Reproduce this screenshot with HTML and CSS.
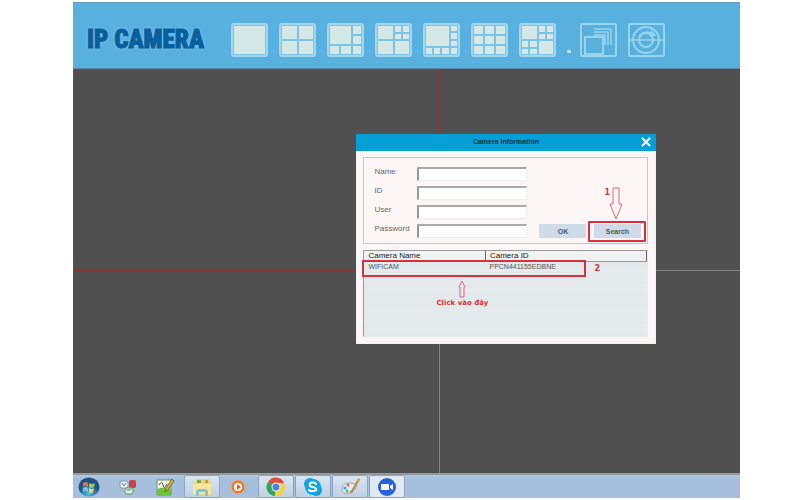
FILE: index.html
```html
<!DOCTYPE html>
<html lang="en">
<head>
<meta charset="utf-8">
<title>IP Camera</title>
<link rel="stylesheet" href="styles.css">
</head>
<body>
<div class="screen">
  <header class="topbar">
    <h1 class="brand">IP CAMERA</h1>
    <nav class="layouts" aria-label="View layouts">
      <button class="layout" aria-label="1 view"><svg viewBox="0 0 37 34"><rect class="plate" x="1" y="1" width="35" height="32" rx="2"/><path class="cell" d="M3 3h31v28H3z"/></svg></button>
      <button class="layout" aria-label="4 views"><svg viewBox="0 0 37 34"><rect class="plate" x="1" y="1" width="35" height="32" rx="2"/><path class="cell" d="M3 3h15v13H3zM20 3h14v13H20zM3 18h15v13H3zM20 18h14v13H20z"/></svg></button>
      <button class="layout" aria-label="6 views"><svg viewBox="0 0 37 34"><rect class="plate" x="1" y="1" width="35" height="32" rx="2"/><path class="cell" d="M3 3h21v18H3zM26 3h8v8h-8zM26 13h8v8h-8zM26 23h8v8h-8zM3 23h9v8H3zM14 23h10v8H14z"/></svg></button>
      <button class="layout" aria-label="7 views"><svg viewBox="0 0 37 34"><rect class="plate" x="1" y="1" width="35" height="32" rx="2"/><path class="cell" d="M3 3h15v13H3zM20 3h6v6h-6zM28 3h6v6h-6zM20 11h6v5h-6zM28 11h6v5h-6zM3 18h15v13H3zM20 18h14v13H20z"/></svg></button>
      <button class="layout" aria-label="8 views"><svg viewBox="0 0 37 34"><rect class="plate" x="1" y="1" width="35" height="32" rx="2"/><path class="cell" d="M3 3h23v20H3zM28 3h6v5h-6zM28 10h6v6h-6zM28 18h6v5h-6zM28 25h6v6h-6zM3 25h6v6H3zM11 25h6v6h-6zM19 25h7v6h-7z"/></svg></button>
      <button class="layout" aria-label="9 views"><svg viewBox="0 0 37 34"><rect class="plate" x="1" y="1" width="35" height="32" rx="2"/><path class="cell" d="M3 3h9v8H3zM14 3h9v8h-9zM25 3h9v8h-9zM3 13h9v8H3zM14 13h9v8h-9zM25 13h9v8h-9zM3 23h9v8H3zM14 23h9v8h-9zM25 23h9v8h-9z"/></svg></button>
      <button class="layout" aria-label="10 views"><svg viewBox="0 0 37 34"><rect class="plate" x="1" y="1" width="35" height="32" rx="2"/><path class="cell" d="M3 3h15v13H3zM20 3h6v6h-6zM28 3h6v6h-6zM20 11h6v5h-6zM28 11h6v5h-6zM3 18h6v6H3zM11 18h7v6h-7zM3 26h6v5H3zM11 26h7v5h-7zM20 18h14v13H20z"/></svg></button>
      <span class="dot"></span>
      <button class="layout" aria-label="Cascade"><svg class="line" viewBox="0 0 37 34"><rect x="1" y="1" width="35" height="32" rx="1"/><path d="M5 14h18v17H5z"/><path class="thin" d="M14 6h17v16M14 9h14v13M14 12h11v10"/></svg></button>
      <button class="layout" aria-label="Full screen"><svg class="line" viewBox="0 0 37 34"><rect x="1" y="1" width="35" height="32" rx="1"/><circle cx="18" cy="17" r="13"/><circle cx="18" cy="17" r="7"/><path class="thin" d="M1 17h34M11 13c4-5 11-5 15-1M23 8l4 4-5 1"/></svg></button>
    </nav>
  </header>

  <main class="wall">
    <div class="view selected"></div>
    <div class="view"></div>
    <div class="view"></div>
    <div class="view"></div>

    <section class="dialog" aria-labelledby="dialog-title">
      <div class="titlebar">
        <h2 id="dialog-title">Camera Information</h2>
        <button class="close" aria-label="Close"><svg viewBox="0 0 10 10"><path d="M1 1l8 8M9 1L1 9"/></svg></button>
      </div>
      <div class="content">
        <form class="panel">
          <div class="fields">
            <label for="name">Name</label><input id="name" type="text">
            <label for="cid">ID</label><input id="cid" type="text">
            <label for="user">User</label><input id="user" type="text">
            <label for="pass">Password</label><input id="pass" type="password">
          </div>
          <div class="actions">
            <button class="btn" type="button">OK</button>
            <div class="callout">
              <button class="btn" type="button">Search</button>
              <span class="note step-one">1</span>
              <svg class="arrow-down" viewBox="0 0 14 33"><path d="M4 1h6v16h3L7 32 1 17h3z"/></svg>
            </div>
          </div>
        </form>
        <div class="list">
          <table>
            <thead><tr><th>Camera Name</th><th>Camera ID</th></tr></thead>
            <tbody><tr><td>WIFICAM</td><td>PPCN441155EDBNE</td></tr></tbody>
          </table>
          <div class="mark"></div>
          <span class="note step-two">2</span>
          <div class="hint">
            <svg viewBox="0 0 8 18"><path d="M2 17V7H1l3-6 3 6H6v10z"/></svg>
            <span class="note">Click vào đây</span>
          </div>
        </div>
      </div>
    </section>
  </main>

  <footer class="taskbar">
    <button class="app start" aria-label="Start"><svg viewBox="0 0 22 20"><defs><radialGradient id="orb" cx="50%" cy="85%"><stop offset="0" stop-color="#4dc4ee"/><stop offset="1" stop-color="#205085"/></radialGradient></defs><ellipse cx="11" cy="10" rx="10.500" ry="9.500" fill="url(#orb)"/><path d="M5 6q3-2 5 0v4q-3-2-5 0z" fill="#ee6c35"/><path d="M11 6q3 2 6 0l-1 4q-3 2-5 0z" fill="#9dce4e"/><path d="M5 11q3-2 5 0v4q-3-2-5 0z" fill="#72c3f0"/><path d="M11 11q3 2 5 0l-1 4q-2 2-4 0z" fill="#ffd34e"/></svg></button>
    <button class="app" aria-label="Keyboard input"><svg viewBox="0 0 22 20"><rect x="3" y="4" width="8" height="7" rx="2" fill="#eef5fc" stroke="#8196bb"/><rect x="12" y="3" width="7" height="8" rx="2" fill="#d33b45"/><rect x="8" y="11" width="8" height="6" rx="2" fill="#e6f2e2" stroke="#5d9c65"/><path d="M5 6l2 3 2-3M14 5l3 4M10 13h4" stroke="#5d6e94" fill="none"/></svg></button>
    <button class="app" aria-label="Notepad++"><svg viewBox="0 0 22 20"><path d="M3 3h14v15H3z" fill="#f0f4ea" stroke="#739366"/><path d="M3 12q7-3 14 0v6H3z" fill="#6bc23d"/><path d="M5 8q3-5 4 0t4-1" fill="none" stroke="#40513b"/><path d="M18 2l2 2-7 10-2 1 1-4z" fill="#e5af3d" stroke="#77672f"/></svg></button>
    <button class="app open" aria-label="Explorer"><svg viewBox="0 0 22 20"><path d="M2 5h3V2h13v3h2v13H2z" fill="#ecd581"/><path d="M6 3h4v3H6z" fill="#77ac5b"/><path d="M14 3h3v3h-3z" fill="#d99449"/><path d="M2 7h18v10H2z" fill="#f9e59b"/><path d="M5 19v-4q0-3 3-3h6q3 0 3 3v4h-3v-4H8v4z" fill="#78c8e8"/></svg></button>
    <button class="app" aria-label="Media player"><svg viewBox="0 0 22 20"><rect x="11" y="5" width="8" height="11" rx="2" fill="#8fc0df"/><circle cx="10" cy="10" r="7" fill="#e77c38" stroke="#f0b179"/><circle cx="10" cy="10" r="4" fill="#fff"/><path d="M9 7l4 3-4 3z" fill="#d96524"/></svg></button>
    <button class="app open" aria-label="Chrome"><svg viewBox="0 0 22 20"><path d="M11 10L3 5a9 9 0 0 1 16 1z" fill="#df4b3d"/><path d="M11 10L3 5a9 9 0 0 0 7 14z" fill="#36a35a"/><path d="M11 10L10 19A9 9 0 0 0 19 6h-8z" fill="#f8ce42"/><circle cx="11" cy="10" r="4.500" fill="#f5f7f5"/><circle cx="11" cy="10" r="3.500" fill="#4287e5"/></svg></button>
    <button class="app open" aria-label="Skype"><svg viewBox="0 0 22 20"><circle cx="8" cy="7" r="6" fill="#109fd8"/><circle cx="14" cy="13" r="6" fill="#109fd8"/><circle cx="11" cy="10" r="8" fill="#12a5df"/><path d="M14 7q-1-2-4-1.500T8 9q1 1 3 1t3 2-3 2-4-1" fill="none" stroke="#fff" stroke-width="2" stroke-linecap="round"/></svg></button>
    <button class="app open" aria-label="Paint"><svg viewBox="0 0 22 20"><path d="M3 12q0-6 8-6 7 0 6 5-1 3-4 2-2 0-2 3-8 2-8-4z" fill="#e2edf1" stroke="#92aab9"/><circle cx="6" cy="11" r="1.500" fill="#4c9edb"/><circle cx="9" cy="8" r="1.500" fill="#df6158"/><circle cx="8" cy="14" r="1.500" fill="#69ad54"/><path d="M20 2l-8 14" stroke="#bd8745" stroke-width="2"/><path d="M17 3l4-2-1 5z" fill="#d6a25d"/></svg></button>
    <button class="app open" aria-label="Zoom"><svg viewBox="0 0 22 20"><circle cx="11" cy="10" r="9" fill="#2563d8"/><rect x="5" y="7" width="8" height="6" rx="1" fill="#fff"/><path d="M14 9l3-2v6l-3-2z" fill="#fff"/></svg></button>
  </footer>
</div>
</body>
</html>
```
FILE: styles.css
```css
* { box-sizing: border-box; }

body {
  margin: 0;
  background: #fff;
  font-family: "Liberation Sans", Arial, sans-serif;
  font-size: 8px;
  color: #444;
}

button {
  border: 0;
  padding: 0;
  background: none;
  font: inherit;
  color: inherit;
}

.screen {
  display: flex;
  flex-direction: column;
  min-height: 100vh;
  margin: 0 60px 0 73px;
  border-top: 2px solid #fff;
  border-bottom: 2px solid #fff;
}

.topbar {
  display: flex;
  align-items: center;
  gap: 24px;
  padding: 20px 14px 11px;
  background: #58b0df;
  border-top: 1px solid #6b9dba;
  border-bottom: 1px solid #5d87a0;
}

.brand {
  margin: 0;
  width: 120px;
  font: 900 25px/34px "Liberation Sans Narrow", "Roboto Condensed", "DejaVu Sans Condensed", sans-serif;
  color: #075f9e;
  white-space: nowrap;
  -webkit-text-stroke: 1px #075f9e;
  text-shadow: 0 0 3px #8cc9ea, 0 0 3px #8cc9ea;
}

.layouts {
  display: flex;
  align-items: center;
  gap: 11px;
}

.layout, .layout svg {
  display: block;
  width: 37px;
  height: 34px;
}

.plate { fill: #7cc4e5; stroke: #a2d8ef; stroke-width: 2; }
.cell { fill: #d3e8e7; }
.line { fill: none; stroke: #98d4ee; stroke-width: 2; }
.thin { stroke-width: 1.5; }

.dot {
  align-self: flex-end;
  width: 4px;
  height: 3px;
  margin: 0 -2px 4px 0;
  border-radius: 1px;
  background: #c5e5f2;
}

.wall {
  position: relative;
  flex: 1;
  display: grid;
  grid-template-columns: 55fr 45fr;
  grid-template-rows: 1fr 1fr;
  min-height: 340px;
  background: #505050;
}

.view {
  border-right: 1px solid #858585;
  border-bottom: 1px solid #858585;
}
.view:nth-child(even) { border-right: 0; }
.view:nth-child(3), .view:nth-child(4) { border-bottom: 0; }
.view.selected {
  border: 1px solid #a8303a;
  border-right: 2px solid #8e3439;
  border-bottom: 2px solid #8e3439;
}

.dialog {
  position: absolute;
  top: 16%;
  left: 42.5%;
  width: 300px;
  background: #fdf6f6;
  border: 1px solid #f3f3f3;
  border-top: 0;
}

.titlebar {
  display: grid;
  grid-template-columns: 1fr auto;
  align-items: center;
  height: 17px;
  margin: 0 -1px;
  padding-right: 5px;
  background: #049fd7;
}

.titlebar h2 {
  margin: 0;
  padding-left: 14px;
  font-size: 7px;
  line-height: 16px;
  text-align: center;
  color: #07364c;
}

.close svg {
  display: block;
  width: 10px;
  height: 10px;
  stroke: #fff;
  stroke-width: 2;
}

.content { padding: 6px 7px 6px 6px; }

.panel {
  display: flex;
  justify-content: space-between;
  padding: 9px 1px 5px 10px;
  border: 1px solid #c9c6c6;
}

.fields {
  display: grid;
  grid-template-columns: 43px 110px;
  grid-auto-rows: 14px;
  row-gap: 5px;
}

.fields label { line-height: 10px; color: #666; }

.fields input {
  width: 100%;
  height: 14px;
  padding: 0 2px;
  border: 1px solid #eee;
  border-top: 2px solid #aaa;
  border-left: 2px solid #999;
  background: #fff;
  font: inherit;
}

.actions {
  display: flex;
  align-items: center;
  align-self: flex-end;
  gap: 2px;
  margin-bottom: -4px;
}

.btn {
  width: 47px;
  height: 14px;
  background: #cfdbe6;
  font-size: 7px;
  font-weight: bold;
  color: #4b5661;
}

.callout {
  position: relative;
  display: flex;
  justify-content: center;
  align-items: center;
  width: 58px;
  height: 21px;
  border: 2px solid #d9303c;
  border-radius: 1px;
}

.note {
  font: bold 8px/10px "DejaVu Sans", sans-serif;
  color: #d9303c;
}

.step-one { position: absolute; left: 14px; top: -35px; }
.step-two { position: absolute; left: 230px; top: 13px; }

.arrow-down {
  position: absolute;
  left: 19px;
  top: -36px;
  width: 14px;
  height: 33px;
}

.arrow-down, .hint svg { fill: none; stroke: #df6a72; }

.list {
  position: relative;
  height: 87px;
  margin-top: 6px;
  border: 1px solid #999;
  border-right-color: #e7ebec;
  border-bottom-color: #e7ebec;
  background: repeating-linear-gradient(#e4eaec 0 9px, #e8ecee 9px 10px);
}

table {
  width: 100%;
  border-collapse: collapse;
  table-layout: fixed;
}

th, td {
  height: 11px;
  padding: 0 4px;
  font-size: 8px;
  line-height: 10px;
  font-weight: normal;
  text-align: left;
}

th {
  background: #f1f3f3;
  border-right: 1px solid #666;
  border-bottom: 1px solid #999;
  color: #222;
}
th:first-child { width: 121px; }
td { color: #555; font-size: 7px; }

.mark {
  position: absolute;
  left: -2px;
  top: 9px;
  width: 224px;
  height: 17px;
  border: 2px solid #d9303c;
}

.hint {
  position: absolute;
  left: 72px;
  top: 29px;
  display: flex;
  flex-direction: column;
  align-items: center;
  white-space: nowrap;
}
.hint svg { width: 8px; height: 18px; }
.hint .note { font-size: 7px; }

.taskbar {
  display: flex;
  align-items: stretch;
  gap: 1px;
  height: 25px;
  padding-right: 8px;
  border-top: 2px solid #9399a0;
  background: linear-gradient(#b3cae2, #a5bfdc 4px);
}

.app {
  display: grid;
  place-items: center;
  width: 36px;
  border: 1px solid transparent;
}
.app svg { width: 22px; height: 20px; }
.start { padding-right: 4px; }
.open {
  border-color: #8ba3c1;
  border-radius: 2px;
  background: linear-gradient(#d9e5f1, #bed0e4);
}
.open:last-child { background: #e0e9f5; }
```
